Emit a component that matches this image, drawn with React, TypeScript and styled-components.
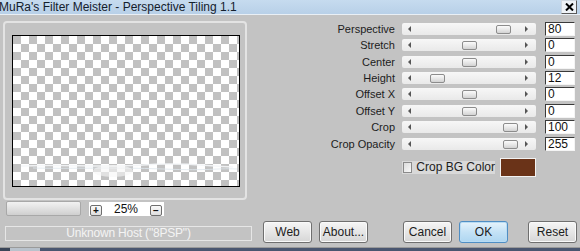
import React from "react";
import styled, { createGlobalStyle } from "styled-components";

const Global = createGlobalStyle`
  html, body { margin: 0; padding: 0; background: #c3c3c3; }
  body { font-family: "Liberation Sans", Arial, sans-serif; }
`;

const Window = styled.div`
  width: 580px;
  height: 251px;
  background: #c3c3c3;
  display: flex;
  flex-direction: column;
  overflow: hidden;
  position: relative;
`;

const TitleBar = styled.div`
  height: 14px;
  background: linear-gradient(#c6dbef, #b8d0e8);
  border-bottom: 1px solid #e9eff5;
  display: flex;
  align-items: center;
  justify-content: space-between;
  padding-right: 3px;
`;

const TitleText = styled.span`
  font-size: 12px;
  color: #14202c;
  margin-left: -1px;
  line-height: 14px;
  white-space: nowrap;
`;

const CloseBox = styled.div`
  width: 14px;
  height: 12px;
  align-self: flex-start;
  background: #eef2f6;
  border: 1px solid #5a5a5a;
  border-top-color: #d0d8e0;
  border-left-color: #d0d8e0;
  display: flex;
  align-items: center;
  justify-content: center;
`;

const Upper = styled.div`
  display: flex;
  height: 201px;
`;

const LeftCol = styled.div`
  width: 250px;
  padding-left: 3px;
  padding-top: 6px;
  box-sizing: border-box;
  display: flex;
  flex-direction: column;
`;

const PreviewFrame = styled.div`
  width: 244px;
  height: 179px;
  box-sizing: border-box;
  border: 2px solid #e3e3e3;
  border-radius: 4px;
  padding: 12px 0 0 7px;
`;

const Checker = styled.div`
  width: 228px;
  height: 152px;
  box-sizing: border-box;
  border: 1px solid #000;
  position: relative;
  background: repeating-conic-gradient(#fff 0 25%, #c1c1c1 0 50%) 0 0 / 16px 16px;
  overflow: hidden;
`;

const Wave = styled.svg`
  position: absolute;
  left: 0;
  top: 124px;
`;

const ZoomRow = styled.div`
  display: flex;
  align-items: flex-end;
  margin-top: 2px;
  height: 14px;
`;

const ZoomBar = styled.div`
  width: 73px;
  height: 13px;
  margin-left: 3px;
  border: 1px solid #a8a8a8;
  border-radius: 2px;
  background: linear-gradient(#f2f2f2, #dadada 70%, #cfcfcf);
`;

const ZoomBox = styled.div`
  width: 75px;
  height: 14px;
  margin-left: 8px;
  background: #ffffff;
  display: flex;
  align-items: flex-end;
  justify-content: space-between;
  padding: 0 2px 0 1px;
  box-sizing: border-box;
`;

const MiniBtn = styled.div`
  width: 12px;
  height: 11px;
  box-sizing: border-box;
  border: 1px solid #6e6e6e;
  border-radius: 2px;
  background: linear-gradient(#fafafa, #dedede);
  font-size: 10px;
  line-height: 9px;
  text-align: center;
  font-weight: bold;
  color: #111;
`;

const ZoomText = styled.span`
  font-size: 12px;
  color: #111;
  line-height: 14px;
`;

const RightCol = styled.div`
  margin-left: auto;
  padding: 7px 5px 0 0;
`;

const SliderGrid = styled.div`
  display: grid;
  grid-template-columns: auto 143px 30px;
  grid-auto-rows: 14px;
  row-gap: 2.36px;
  align-items: center;
`;

const Label = styled.div`
  font-size: 11px;
  color: #1c1c1c;
  text-align: right;
  margin-right: 7px;
  white-space: nowrap;
`;

const Track = styled.div`
  position: relative;
  height: 12px;
  margin-right: 9px;
  border-radius: 2px;
  background: linear-gradient(#f7f7f7, #e9e9e9);
  display: flex;
  align-items: center;
  justify-content: space-between;
  padding: 0 8px 0 6px;
`;

const Arrow = styled.span<{ $dir: "l" | "r" }>`
  width: 0;
  height: 0;
  border-top: 3px solid transparent;
  border-bottom: 3px solid transparent;
  ${(p) => (p.$dir === "l" ? "border-right: 3px solid #555;" : "border-left: 3px solid #555;")}
`;

const Thumb = styled.div`
  position: absolute;
  top: 2px;
  width: 15px;
  height: 9px;
  box-sizing: border-box;
  border: 1px solid #8c8c8c;
  border-radius: 2px;
  background: linear-gradient(#fbfbfb, #e4e4e4 60%, #d2d2d2);
`;

const ValueBox = styled.div`
  height: 14px;
  box-sizing: border-box;
  background: #fff;
  border-top: 1px solid #3a3a3a;
  border-left: 1px solid #3a3a3a;
  border-right: 1px solid #f4f4f4;
  border-bottom: 1px solid #f4f4f4;
  font-size: 12px;
  line-height: 12px;
  padding-left: 2px;
  color: #111;
`;

const CheckRow = styled.div`
  grid-column: 2;
  margin-top: 15px;
  margin-right: 9px;
  display: flex;
  align-items: center;
  justify-content: space-between;
  height: 19px;
`;

const CheckLabel = styled.label`
  display: flex;
  align-items: center;
  gap: 4px;
  height: 13px;
  width: 93px;
  padding-left: 1px;
  box-sizing: border-box;
  background: #d9d9d9;
  font-size: 12px;
  color: #1c1c1c;
  white-space: nowrap;
`;

const CheckBox = styled.span`
  width: 11px;
  height: 11px;
  box-sizing: border-box;
  border: 1px solid #8a8a8a;
  background: linear-gradient(135deg, #dcdcdc, #f8f8f8);
`;

const Swatch = styled.div`
  width: 36px;
  height: 19px;
  box-sizing: border-box;
  border: 1px solid #f2f2f2;
  background: #6a3318;
`;

const Lower = styled.div`
  display: flex;
  align-items: flex-start;
  height: 22px;
  margin-top: 5px;
  padding-left: 5px;
`;

const Status = styled.div`
  width: 247px;
  height: 15px;
  margin-top: 5px;
  box-sizing: border-box;
  border: 1px solid #e6e6e6;
  font-size: 12px;
  line-height: 13px;
  color: #f4f4f4;
  text-align: center;
  letter-spacing: -0.2px;
`;

const Button = styled.div<{ $gap: number; $primary?: boolean }>`
  width: 49px;
  height: 22px;
  margin-left: ${(p) => p.$gap}px;
  box-sizing: border-box;
  border: 1px solid ${(p) => (p.$primary ? "#4f8ec4" : "#6f6f6f")};
  border-radius: 3px;
  background: ${(p) =>
    p.$primary
      ? "linear-gradient(#e6f3fb, #c4e2f6 50%, #aed6f1)"
      : "linear-gradient(#f6f6f6, #e6e6e6 50%, #d6d6d6)"};
  box-shadow: inset 0 0 0 1px ${(p) => (p.$primary ? "#b9dcf3" : "#fafafa")};
  font-size: 12px;
  line-height: 20px;
  text-align: center;
  color: #1c1c1c;
`;

const BottomStrip = styled.div`
  margin-top: auto;
  height: 3px;
  border-top: 1px solid #9a9a9a;
  background: linear-gradient(90deg, #3a4558 0 10px, #b9c2cc 10px 40px, #4a5670 40px 100%);
`;

const sliders = [
  { label: "Perspective", value: "80", pos: 94 },
  { label: "Stretch", value: "0", pos: 60 },
  { label: "Center", value: "0", pos: 60 },
  { label: "Height", value: "12", pos: 28 },
  { label: "Offset X", value: "0", pos: 60 },
  { label: "Offset Y", value: "0", pos: 60 },
  { label: "Crop", value: "100", pos: 101 },
  { label: "Crop Opacity", value: "255", pos: 101 },
];

export default function App() {
  return (
    <>
      <Global />
      <Window>
        <TitleBar>
          <TitleText>MuRa's Filter Meister - Perspective Tiling 1.1</TitleText>
          <CloseBox>
            <svg width="9" height="8" viewBox="0 0 9 8">
              <path d="M1 0.5 L8 7.5 M8 0.5 L1 7.5" stroke="#000" strokeWidth="2" />
            </svg>
          </CloseBox>
        </TitleBar>
        <Upper>
          <LeftCol>
            <PreviewFrame>
              <Checker>
                <Wave width="226" height="20" viewBox="0 0 226 20">
                  <path d="M8 6 C50 4, 90 8, 130 5 S 190 6, 220 7" stroke="#f4f6f8" strokeWidth="1.5" fill="none" opacity="0.9" />
                  <path d="M20 8 C60 9, 100 7, 150 9 S 200 8, 224 9" stroke="#dfe7ee" strokeWidth="1" fill="none" opacity="0.8" />
                  <ellipse cx="100" cy="11" rx="20" ry="6" fill="#f6f6f6" opacity="0.6" />
                </Wave>
              </Checker>
            </PreviewFrame>
            <ZoomRow>
              <ZoomBar />
              <ZoomBox>
                <MiniBtn>+</MiniBtn>
                <ZoomText>25%</ZoomText>
                <MiniBtn>−</MiniBtn>
              </ZoomBox>
            </ZoomRow>
          </LeftCol>
          <RightCol>
            <SliderGrid>
              {sliders.map((s) => (
                <React.Fragment key={s.label}>
                  <Label>{s.label}</Label>
                  <Track>
                    <Arrow $dir="l" />
                    <Arrow $dir="r" />
                    <Thumb style={{ left: s.pos }} />
                  </Track>
                  <ValueBox>{s.value}</ValueBox>
                </React.Fragment>
              ))}
              <CheckRow>
                <CheckLabel>
                  <CheckBox />
                  Crop BG Color
                </CheckLabel>
                <Swatch />
              </CheckRow>
            </SliderGrid>
          </RightCol>
        </Upper>
        <Lower>
          <Status>Unknown Host ("8PSP")</Status>
          <Button $gap={11}>Web</Button>
          <Button $gap={7}>About...</Button>
          <Button $gap={35}>Cancel</Button>
          <Button $gap={7} $primary>OK</Button>
          <Button $gap={20}>Reset</Button>
        </Lower>
        <BottomStrip />
      </Window>
    </>
  );
}
